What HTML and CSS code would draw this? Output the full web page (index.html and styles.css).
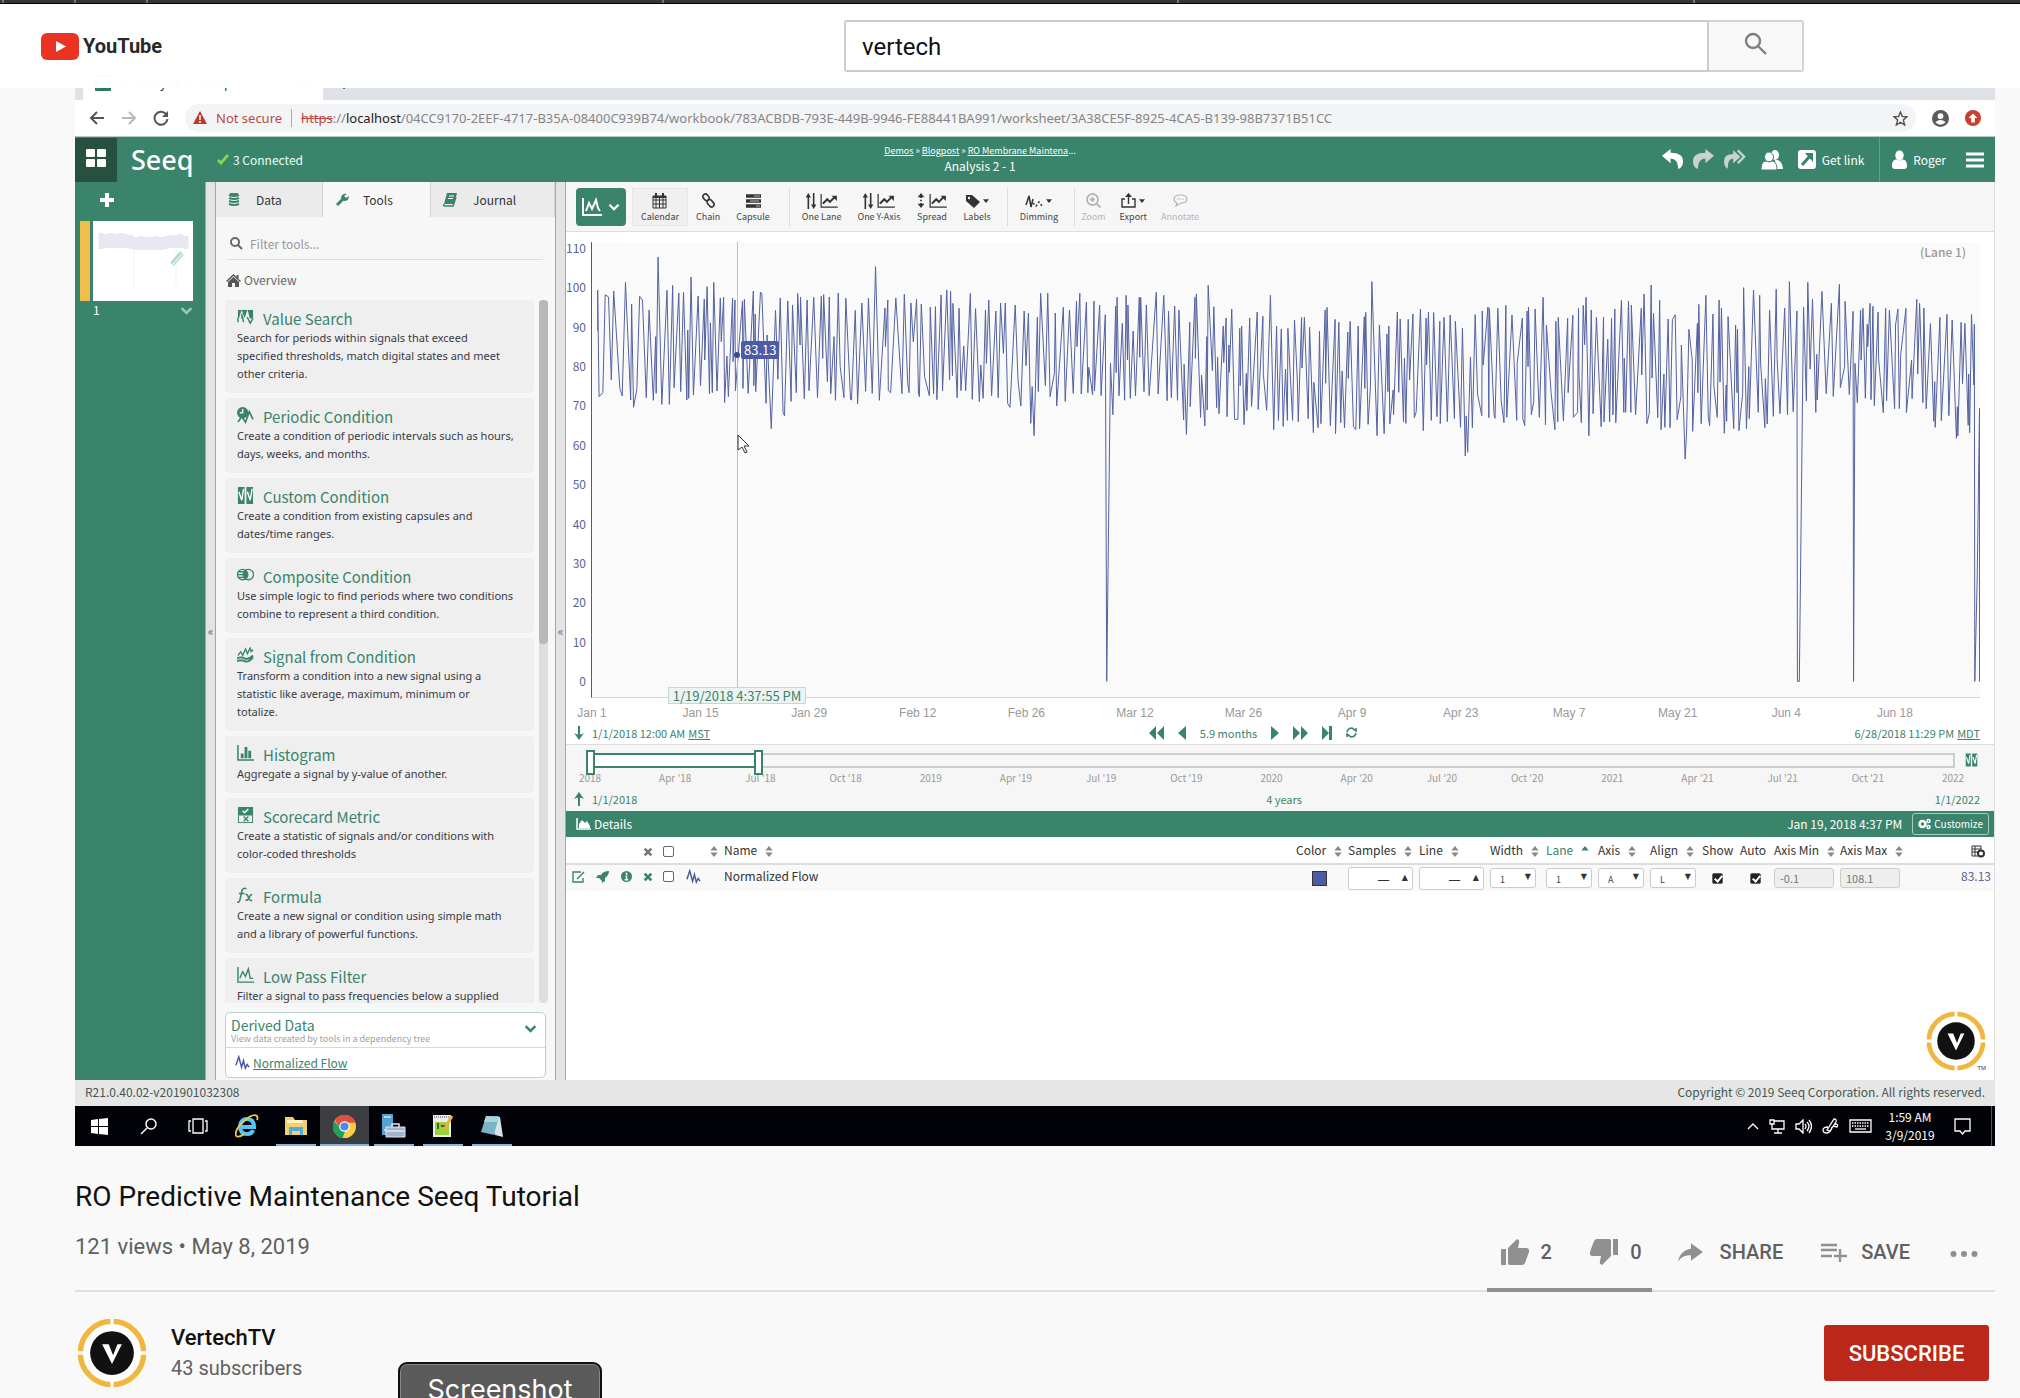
FILE: index.html
```html
<!DOCTYPE html>
<html lang="en">
<head>
    <meta charset="UTF-8">
    <meta name="viewport" content="width=device-width, initial-scale=1.0">
    <title>RO Predictive Maintenance Seeq Tutorial - YouTube</title>
    <link rel="stylesheet" href="styles.css">
</head>
<body>
    <!-- shared icons -->
    <svg class="sprite" aria-hidden="true">
        <symbol id="i-wave" viewBox="0 0 16 16"><path d="M1 11 4 2l3 11 2-7 2 8 2-4 2 3" fill="none" stroke="currentColor" stroke-width="1.6"/></symbol>
        <symbol id="i-sort" viewBox="0 0 8 12"><path d="M4 0 8 5H0zM4 12 0 7h8z" fill="currentColor"/></symbol>
        <symbol id="i-sortup" viewBox="0 0 8 12"><path d="M4 0 8 5H0z" fill="currentColor"/></symbol>
        <symbol id="i-x" viewBox="0 0 12 12"><path d="M2 2l8 8M10 2l-8 8" stroke="currentColor" stroke-width="3.2"/></symbol>
        <symbol id="i-chev" viewBox="0 0 16 16"><path d="M2 5l6 6 6-6" fill="none" stroke="currentColor" stroke-width="3"/></symbol>
        <symbol id="i-arrow" viewBox="0 0 24 24"><path d="M12 4v5C4 10 1 16 0 21c3-5 7-6 12-6v5l11-8z" fill="currentColor"/></symbol>
        <symbol id="i-redo" viewBox="0 0 22 22"><path d="M13 0l9 7-9 8v-5q-8 0-8 11Q0 19 0 13q0-9 13-9z" fill="currentColor"/></symbol>
        <symbol id="i-trend" viewBox="0 0 20 16"><path d="M1 0v15h19" fill="none" stroke="currentColor" stroke-width="1.4"/><path d="M3 11l5-5 3 3 6-6" fill="none" stroke="currentColor" stroke-width="2.4"/><path d="M13 2h6v6z" fill="currentColor"/></symbol>
        <symbol id="i-updown" viewBox="0 0 12 18"><path d="M3 18V3M9 0v15" stroke="currentColor" stroke-width="1.8"/><path d="M3 0l3 5H0zM9 18l3-5H6z" fill="currentColor"/></symbol>
        <symbol id="i-spread" viewBox="0 0 12 18"><path d="M6 0l4 5H2zM6 18l4-5H2z" fill="currentColor"/><path d="M6 4v10" stroke="currentColor" stroke-width="2" stroke-dasharray="2 2"/></symbol>
        <symbol id="i-caret" viewBox="0 0 8 5"><path d="M0 0h8L4 5z" fill="currentColor"/></symbol>
        <symbol id="i-plot" viewBox="0 0 20 20"><path d="M1 1v17h19" fill="none" stroke="currentColor" stroke-width="2"/><path d="M4 14l3-8 3 6 4-9 2 8 2 3" fill="none" stroke="currentColor" stroke-width="2"/></symbol>
        <symbol id="i-user" viewBox="0 0 16 20"><ellipse cx="8" cy="5.500" rx="4.500" ry="5.500" fill="currentColor"/><path d="M0 17c0-5 2-7 5-7q3 2 6 0c3 0 5 2 5 7q0 3-3 3H3q-3 0-3-3z" fill="currentColor"/></symbol>
        <symbol id="i-capsules" viewBox="0 0 18 18"><path fill="currentColor" d="M1 0h7v18H1zM10 0h7v18h-7z"/><path d="M2 5l3 9 2-12M11 5l3 9 2-12" fill="none" stroke="#fff" stroke-width="1.500"/></symbol>
        <symbol id="i-vertech" viewBox="0 0 64 64"><circle cx="32" cy="32" r="32" fill="#fff"/><circle cx="32" cy="32" r="29" fill="none" stroke="#f0b640" stroke-width="5"/><path d="M32 0v64M0 32h64" stroke="#fff" stroke-width="3"/><circle cx="32" cy="32" r="24" fill="#fff"/><circle cx="32" cy="32" r="20" fill="#111"/><path d="M23 24h6l4 10 4-10h4l-9 18z" fill="#fff"/></symbol>
    </svg>

    <header class="masthead">
        <div class="tab-edge"><i></i><i></i><i></i><i></i><i></i><i></i></div>
        <div class="masthead-row">
            <a class="logo" href="#">
                <svg width="38" height="27" viewBox="0 0 38 27"><rect width="38" height="27" rx="6" fill="#eb3323"/><path d="M15 8l10 5.500-10 5.500z" fill="#fff"/></svg>
                <span>YouTube</span>
            </a>
            <form class="search">
                <input type="text" value="vertech" aria-label="Search">
                <button type="button" aria-label="Search">
                    <svg width="26" height="26" viewBox="0 0 26 26" fill="none" stroke="#808080" stroke-width="2.400"><circle cx="10" cy="10" r="7"/><path d="M15 15l8 8"/></svg>
                </button>
            </form>
        </div>
    </header>

    <main class="watch">
        <section class="video">
            <div class="chrome-tabs">
                <div class="chrome-tab"><svg width="16" height="16" viewBox="0 0 16 16"><rect x="1" y="1" width="14" height="14" rx="2" fill="none" stroke="#2a7a60" stroke-width="3"/><path d="M3 13h12" stroke="#2a7a60" stroke-width="3"/></svg><span>1 - Analysis 2 - Seeq</span><span class="tab-close">×</span></div>
                <span class="tab-new">+</span>
            </div>
            <div class="chrome-bar">
                <svg width="16" height="16" viewBox="0 0 16 16" fill="none" stroke="#555" stroke-width="2"><path d="M15 8H2M8 2L2 8l6 6"/></svg>
                <svg width="16" height="16" viewBox="0 0 16 16" fill="none" stroke="#b9b9b9" stroke-width="2"><path d="M1 8h13M8 2l6 6-6 6"/></svg>
                <svg width="16" height="16" viewBox="0 0 16 16"><path d="M13 4a6.500 6.500 0 1 0 1.500 5" fill="none" stroke="#555" stroke-width="2"/><path d="M15 1v6H9z" fill="#555"/></svg>
                <div class="address">
                    <svg width="14" height="14" viewBox="0 0 14 14"><path d="M7 0l7 13H0z" fill="#c0392b"/><path d="M7 4v5M7 10v2" stroke="#fff" stroke-width="1.500"/></svg>
                    <span class="insecure">Not secure</span>
                    <span class="url"><s>https</s>://<b>localhost</b>/04CC9170-2EEF-4717-B35A-08400C939B74/workbook/783ACBDB-793E-449B-9946-FE88441BA991/worksheet/3A38CE5F-8925-4CA5-B139-98B7371B51CC</span>
                    <svg width="15" height="15" viewBox="0 0 16 16" fill="none" stroke="#555" stroke-width="1.500"><path d="M8 1l2 5h5l-4 3.500 1.500 5.500L8 12l-4.500 3L5 9.500 1 6h5z"/></svg>
                </div>
                <svg width="17" height="17" viewBox="0 0 18 18"><circle cx="9" cy="9" r="9" fill="#5a5a5a"/><circle cx="9" cy="6.500" r="3" fill="#fff"/><path d="M3.500 13q5.500-5 11 0-5.500 5-11 0z" fill="#fff"/></svg>
                <svg width="16" height="16" viewBox="0 0 18 18"><circle cx="9" cy="9" r="9" fill="#c8402f"/><path d="M9 4l5 5h-3v5H7V9H4z" fill="#fff"/></svg>
            </div>

            <div class="seeq-header">
                <button class="home" aria-label="Home"><svg width="20" height="18" viewBox="0 0 20 18" fill="#fff"><rect width="9" height="8" rx="1"/><rect x="11" width="9" height="8" rx="1"/><rect y="10" width="9" height="8" rx="1"/><rect x="11" y="10" width="9" height="8" rx="1"/></svg></button>
                <span class="seeq-logo">Seeq</span>
                <span class="connected"><svg width="12" height="11" viewBox="0 0 12 11"><path d="M1 6l3 3 7-8" fill="none" stroke="#8bd450" stroke-width="2.800"/></svg>3 Connected</span>
                <div class="crumbs">
                    <div class="crumb-path"><a href="#">Demos</a> » <a href="#">Blogpost</a> » <a href="#">RO Membrane Maintena</a>...</div>
                    <div>Analysis 2 - 1</div>
                </div>
                <div class="seeq-actions">
                    <svg class="flip" width="21" height="21"><use href="#i-redo"/></svg>
                    <svg class="dim" width="21" height="21"><use href="#i-redo"/></svg>
                    <svg class="dim" width="22" height="21" viewBox="0 0 24 22"><path d="M10 1l8 7-8 7v-5q-6 0-6 11Q0 19 0 13q0-8 10-8z" fill="currentColor"/><path d="M15 1l7 7-7 7" fill="none" stroke="currentColor" stroke-width="2.500"/></svg>
                    <svg class="users" width="22" height="20" viewBox="0 0 22 20" fill="#fff"><ellipse cx="14" cy="5" rx="4" ry="5"/><path d="M14 10q7-1 8 9h-7z"/><g stroke="#3a846c"><ellipse cx="8" cy="7" rx="4.500" ry="5"/><path d="M0 20c0-6 2-9 5-9q3 2 6 0c3 0 5 3 5 9z"/></g></svg>
                    <button class="link-btn"><svg width="18" height="19" viewBox="0 0 18 19"><rect width="18" height="19" rx="3" fill="#fff"/><path d="M4 15l8-9" stroke="#3a846c" stroke-width="3"/><path d="M7 3h8v9z" fill="#3a846c"/></svg>Get link</button>
                    <button class="user-btn"><svg width="15" height="19"><use href="#i-user"/></svg>Roger</button>
                    <svg width="18" height="16" viewBox="0 0 18 16"><path d="M0 2h18M0 8h18M0 14h18" stroke="#fff" stroke-width="3"/></svg>
                </div>
            </div>

            <div class="workspace">
                <nav class="sheets">
                    <svg class="add" width="14" height="14" viewBox="0 0 14 14"><path d="M7 0v14M0 7h14" stroke="#fff" stroke-width="4"/></svg>
                    <div class="sheet">
                        <svg viewBox="0 0 100 80" width="100" height="80"><rect width="100" height="80" fill="#fff"/><path d="M8 12v16M13 13v14M18 12v15M23 13v14M28 12v15M33 13v14M38 14v14M43 16v13M48 15v14M53 16v13M58 16v13M63 15v14M68 16v13M73 15v13M78 14v13M83 14v13M88 13v14M93 15v13" stroke="#e7e8f4" stroke-width="5"/><path d="M83 26v38M41 28v38" stroke="#f2f3f6"/><path d="M79 43l10-11" stroke="#b5dbcb" stroke-width="5"/><path d="M80 43l10-11" stroke="#fff"/></svg>
                    </div>
                    <div class="sheet-foot"><span>1</span><svg width="13" height="13"><use href="#i-chev"/></svg></div>
                </nav>
                <div class="gutter">«</div>

                <aside class="tools">
                    <div class="tool-tabs">
                        <button><svg width="12" height="14" viewBox="0 0 12 14" fill="none" stroke="#3a846c" stroke-width="2.200"><path d="M1 2q5 2 10 0M1 5q5 2 10 0M1 8q5 2 10 0M1 11q5 2 10 0M2 1h8"/></svg>Data</button>
                        <button class="on"><svg width="14" height="14" viewBox="0 0 14 14"><path d="M2 12l7-7" stroke="#3a846c" stroke-width="3"/><path d="M12 1L9 3l2 2 3-2q0 5-5 5L6 5q1-5 6-4z" fill="#3a846c"/></svg>Tools</button>
                        <button><svg width="14" height="14" viewBox="0 0 14 14"><path d="M4 0h10l-3 11H1z" fill="#3a846c"/><path d="M1 11q-1 2 1 2h8l3-9" fill="none" stroke="#3a846c" stroke-width="1.500"/><path d="M6 3h5M5 5.500h5" stroke="#fff"/></svg>Journal</button>
                    </div>
                    <label class="filter">
                        <svg width="13" height="13" viewBox="0 0 13 13" fill="none" stroke="#666" stroke-width="2"><circle cx="5" cy="5" r="4"/><path d="M8 8l4 4"/></svg>
                        <input type="text" placeholder="Filter tools...">
                    </label>
                    <div class="overview"><svg width="15" height="13" viewBox="0 0 15 13" fill="#555"><path d="M0 7l7.500-7 3 3V1h2v4L15 7l-1 1-6.500-6L1 8z"/><path d="M2 8l5.500-5L13 8v5H9V9H6v4H2z"/></svg>Overview</div>

                    <div class="tool-scroll">
                        <div class="tool-list">
                            <a class="tool" href="#">
                                <h3><svg viewBox="0 0 18 18"><path d="M1 1h16v9H1z" fill="currentColor"/><path d="M2 13l3-9 3 9 3-9 2 8" fill="none" stroke="#efefef" stroke-width="2"/><path d="M1 14V9M5 5l2 9M11 9l3 6 3-5" fill="none" stroke="currentColor" stroke-width="1.500"/></svg>Value Search</h3>
                                <p>Search for periods within signals that exceed<br>specified thresholds, match digital states and meet<br>other criteria.</p>
                            </a>
                            <a class="tool" href="#">
                                <h3><svg viewBox="0 0 18 18"><circle cx="6" cy="6" r="6" fill="currentColor"/><path d="M6 2v4H3" fill="none" stroke="#efefef" stroke-width="1.500"/><path d="M1 16l4-6 4 6 4-11 4 8" fill="none" stroke="currentColor" stroke-width="1.800"/></svg>Periodic Condition</h3>
                                <p>Create a condition of periodic intervals such as hours,<br>days, weeks, and months.</p>
                            </a>
                            <a class="tool" href="#">
                                <h3><svg><use href="#i-capsules"/></svg>Custom Condition</h3>
                                <p>Create a condition from existing capsules and<br>dates/time ranges.</p>
                            </a>
                            <a class="tool" href="#">
                                <h3><svg viewBox="0 0 18 18" fill="none" stroke="currentColor" stroke-width="1.400"><circle cx="6" cy="8" r="5.500"/><circle cx="12" cy="8" r="5.500"/><path d="M1 5h8M0 8h10M1 11h8"/><path d="M9 4q3 4 0 8-3-4 0-8z" fill="currentColor"/></svg>Composite Condition</h3>
                                <p>Use simple logic to find periods where two conditions<br>combine to represent a third condition.</p>
                            </a>
                            <a class="tool" href="#">
                                <h3><svg viewBox="0 0 18 18" fill="none" stroke="currentColor" stroke-width="1.400"><path d="M1 9l3-4 2 4 3-7 2 5 3-6 1 4 2-2"/><path d="M0 12q4-2 8 0t9-3M0 15q4-2 8 0t9-4" stroke-width="2"/></svg>Signal from Condition</h3>
                                <p>Transform a condition into a new signal using a<br>statistic like average, maximum, minimum or<br>totalize.</p>
                            </a>
                            <a class="tool" href="#">
                                <h3><svg viewBox="0 0 18 18"><path d="M1 0v16h17" fill="none" stroke="currentColor" stroke-width="1.600"/><path d="M4 9h3v5H4zM8 2h3v12H8zM12 6h3v8h-3z" fill="currentColor"/></svg>Histogram</h3>
                                <p>Aggregate a signal by y-value of another.</p>
                            </a>
                            <a class="tool" href="#">
                                <h3><svg viewBox="0 0 18 18"><path d="M1 0h16v17H1z" fill="currentColor"/><path d="M2 9h14v7H2z" fill="#efefef"/><path d="M6 4l2 2 4-4" fill="none" stroke="#fff" stroke-width="1.500"/><path d="M7 10l5 5M12 10l-5 5" stroke="currentColor" stroke-width="1.400"/></svg>Scorecard Metric</h3>
                                <p>Create a statistic of signals and/or conditions with<br>color-coded thresholds</p>
                            </a>
                            <a class="tool" href="#">
                                <h3><svg viewBox="0 0 18 18" fill="none" stroke="currentColor" stroke-width="1.600"><path d="M10 2q-4-2-5 3L3 14q-1 3-3 2M2 7h6M9 8q2-1 3 3t4 3M16 8q-2 0-3 3t-4 3"/></svg>Formula</h3>
                                <p>Create a new signal or condition using simple math<br>and a library of powerful functions.</p>
                            </a>
                            <a class="tool" href="#">
                                <h3><svg viewBox="0 0 18 18" fill="none" stroke="currentColor" stroke-width="1.500"><path d="M1 0v16h17"/><path d="M3 12l3-7 3 5 3-8 2 10h3"/></svg>Low Pass Filter</h3>
                                <p>Filter a signal to pass frequencies below a supplied</p>
                            </a>
                        </div>
                        <div class="track"><div class="thumb"></div></div>
                    </div>

                    <div class="derived">
                        <div class="derived-head">
                            <div><h3>Derived Data</h3><p>View data created by tools in a dependency tree</p></div>
                            <svg width="13" height="13"><use href="#i-chev"/></svg>
                        </div>
                        <div class="derived-row"><svg width="15" height="15"><use href="#i-wave"/></svg><a href="#">Normalized Flow</a></div>
                    </div>
                </aside>
                <div class="gutter">«</div>

                <section class="display">
                    <div class="toolbar">
                        <button class="view-btn" aria-label="Trend view"><svg width="20" height="20"><use href="#i-plot"/></svg><svg width="12" height="12"><use href="#i-chev"/></svg></button>
                        <button class="tb pressed"><span><svg width="15" height="16" viewBox="0 0 15 16" fill="none" stroke="currentColor"><path d="M1 3h13v12H1zM1 7h13M1 11h13M4 4v11M7.500 4v11M11 4v11"/><path d="M1 4h13M4 0v3M11 0v3" stroke-width="2"/></svg></span>Calendar</button>
                        <button class="tb"><span><svg width="15" height="15" viewBox="0 0 15 15" fill="none" stroke="currentColor" stroke-width="1.600"><rect x="1" y="2" width="7" height="5" rx="2.500" transform="rotate(50 5 5)"/><rect x="6" y="8" width="8" height="5" rx="2.500" transform="rotate(50 10 10)"/></svg></span>Chain</button>
                        <button class="tb"><span><svg width="15" height="14" viewBox="0 0 15 14"><path d="M0 2h15M0 7h15M0 12h15" stroke="currentColor" stroke-width="3.500"/><path d="M8 2h6M4 7h9M10 12h4" stroke="#bbb"/></svg></span>Capsule</button>
                        <button class="tb first lanes"><span><svg width="12" height="16"><use href="#i-updown"/></svg><svg width="18" height="14"><use href="#i-trend"/></svg></span>One Lane</button>
                        <button class="tb"><span><svg width="12" height="16"><use href="#i-updown"/></svg><svg width="18" height="14"><use href="#i-trend"/></svg></span>One Y-Axis</button>
                        <button class="tb"><span><svg width="10" height="17"><use href="#i-spread"/></svg><svg width="18" height="14"><use href="#i-trend"/></svg></span>Spread</button>
                        <button class="tb last"><span><svg width="14" height="14" viewBox="0 0 14 14"><path d="M0 1h6l8 7-6 6-8-7z" fill="currentColor"/><circle cx="3" cy="4" r="1.200" fill="#fff"/></svg><svg width="6" height="4"><use href="#i-caret"/></svg></span>Labels</button>
                        <button class="tb first last"><span><svg width="18" height="14" viewBox="0 0 18 14" fill="none" stroke="currentColor" stroke-width="1.500"><path d="M1 11l3-9 2 11 2-8"/><path d="M8 9l3 3 3-4 3 4" stroke-dasharray="2 2"/></svg><svg width="6" height="4"><use href="#i-caret"/></svg></span>Dimming</button>
                        <button class="tb first off"><span><svg width="15" height="15" viewBox="0 0 15 15" fill="none" stroke="currentColor" stroke-width="1.800"><circle cx="6.500" cy="6.500" r="5.500"/><path d="M10.500 10.500l4 4M6.500 4v5M4 6.500h5"/></svg></span>Zoom</button>
                        <button class="tb"><span><svg width="15" height="15" viewBox="0 0 15 15" fill="none" stroke="currentColor" stroke-width="1.400"><path d="M4 6H1v8h13V6h-3M7.500 11V2"/><path d="M4 4l3.500-4L11 4z" fill="currentColor" stroke="none"/></svg><svg width="6" height="4"><use href="#i-caret"/></svg></span>Export</button>
                        <button class="tb off"><span><svg width="15" height="13" viewBox="0 0 15 13" fill="none" stroke="currentColor" stroke-width="1.200"><path d="M3 12l1-3Q1 8 1 5q0-4 6.500-4T14 5q0 4-6 4z"/><path d="M4 5h7" stroke-dasharray="1.500 1"/></svg></span>Annotate</button>
                    </div>

                    <div class="chart">
                        <div class="y-axis"><span>110</span><span>100</span><span>90</span><span>80</span><span>70</span><span>60</span><span>50</span><span>40</span><span>30</span><span>20</span><span>10</span><span>0</span></div>
                        <div class="plot">
                            <svg viewBox="67 66 2942 1365" preserveAspectRatio="none">
                                <polyline points="79,332 79,210 82,530 90,518 95,224 102,231 108,480 113,213 126,505 131,528 138,187 149,540 151,252 155,562 162,508 168,229 174,240 182,533 188,270 197,541 202,350 203,520 207,111 215,553 226,211 231,553 238,196 241,503 251,219 255,515 261,217 268,540 270,330 272,535 277,171 282,525 292,228 297,497 305,237 306,420 311,200 316,522 318,308 322,518 325,187 332,513 339,234 341,365 346,232 348,548 353,408 356,530 365,234 366,425 370,240 371,512 386,243 387,505 390,238 398,520 409,213 410,497 413,282 414,515 424,216 427,222 436,550 438,345 447,626 456,271 461,478 466,234 472,578 475,587 482,243 489,544 492,255 500,518 503,220 508,375 509,232 517,536 523,240 527,512 537,232 545,533 553,229 556,415 558,224 566,485 570,231 573,521 580,350 583,541 589,219 593,440 601,533 605,235 615,538 617,540 625,271 630,551 639,249 647,514 653,234 661,520 668,140 676,541 688,264 689,380 694,240 695,512 700,518 711,234 724,521 729,223 736,487 739,518 743,249 748,365 755,238 759,520 761,530 765,252 772,470 782,527 784,262 791,521 795,260 798,539 807,225 810,513 819,210 825,479 827,213 831,467 832,250 841,533 845,265 849,512 855,378 859,512 869,220 873,538 880,266 888,545 891,435 896,535 901,270 903,430 908,240 914,527 923,273 928,533 933,249 939,400 943,249 948,550 953,562 964,255 970,480 976,558 983,273 987,437 992,280 997,610 1000,500 1004,647 1011,291 1013,515 1018,220 1028,497 1033,220 1038,530 1047,460 1049,279 1052,558 1066,262 1070,544 1079,270 1087,520 1094,243 1095,380 1101,220 1104,522 1115,246 1118,518 1120,442 1128,524 1131,243 1132,513 1143,255 1146,527 1155,284 1158,1384 1166,430 1171,584 1177,258 1178,458 1180,232 1184,527 1191,310 1196,541 1199,226 1202,420 1203,255 1208,535 1214,333 1219,527 1227,232 1228,412 1230,232 1237,515 1242,255 1248,527 1263,217 1267,522 1279,226 1286,542 1289,273 1295,533 1302,258 1308,541 1311,270 1321,600 1322,433 1327,643 1334,307 1335,560 1345,232 1346,415 1348,222 1357,592 1359,465 1366,618 1370,350 1371,570 1373,196 1382,452 1385,260 1391,563 1393,411 1396,581 1405,318 1406,428 1411,294 1413,590 1417,375 1418,457 1423,267 1429,598 1436,598 1440,325 1441,497 1444,318 1449,614 1454,460 1455,572 1461,294 1465,559 1477,276 1479,568 1489,289 1490,463 1497,571 1505,226 1512,629 1518,318 1522,601 1528,327 1532,619 1537,447 1541,601 1542,325 1552,601 1556,300"/>
                                <g transform="translate(1526 0)">
                                    <polyline points="30,300 36,480 38,605 45,292 46,444 51,292 59,596 62,322 70,638 71,487 80,623 83,333 86,611 95,270 96,490 99,262 106,617 116,298 117,641 124,307 128,608 131,453 136,623 143,336 144,475 148,304 155,620 160,629 165,318 168,626 178,290 179,505 181,277 186,613 191,500 194,185 201,480 205,647 210,315 220,641 226,342 228,515 230,318 232,612 239,510 240,584 248,276 251,517 254,297 261,605 263,415 266,610 271,298 274,480 281,282 284,593 288,575 297,267 303,632 309,294 310,435 314,276 320,601 325,278 332,590 338,304 339,611 347,292 354,605 360,285 369,596 371,304 382,622 386,325 392,708 394,588 397,697 403,411 407,623 413,284 418,522 427,587 428,273 430,435 440,261 442,593 443,265 453,583 455,595 461,265 468,540 474,608 478,256 479,435 480,592 491,285 501,601 502,430 513,294 514,596 518,617 523,273 525,440 526,261 532,584 537,545 540,267 549,592 557,232 562,614 564,315 574,520 582,629 584,304 588,605 589,292 600,602 609,295 610,518 620,286 621,592 630,577 632,265 633,460 638,608 642,256 645,374 648,232 654,647 659,270 663,581 670,292 680,620 685,291 686,606 694,358 698,606 702,295 705,584 709,267 711,608 723,241 728,577 729,415 732,577 738,243 743,577 744,255 753,584 765,265 766,465 771,222 777,611 782,580 786,195 788,474 791,280 800,593 804,241 807,629 813,462 815,622 822,297 826,623 831,299 837,284 841,599 849,530 850,375 858,717 861,640 866,328 873,420 874,634 884,310 885,518 887,253 892,611 902,226 907,590 910,617 917,282 919,500 926,592 930,240 932,486 935,264 941,640 945,495 946,604 949,290 961,626 965,315 968,518 969,328 972,632 980,520 982,203 988,626 993,440 994,596 1003,210 1013,577 1016,226 1018,430 1027,623 1028,476 1032,612 1037,271 1045,589 1051,208 1053,418 1059,581 1069,264 1075,584 1079,185 1087,575 1095,273 1096,1384 1100,1384 1109,262 1115,543 1118,187 1123,447 1128,238 1135,577 1137,403 1138,540 1148,214 1157,521 1168,250 1172,529 1185,193 1187,503 1196,440 1197,244 1206,524 1214,274 1215,1384 1218,430 1223,548 1230,271 1231,420 1235,265 1240,535 1244,313 1245,380 1250,250 1252,539 1256,259 1259,557 1267,276 1268,415 1278,578 1283,265 1285,542 1291,270 1302,566 1304,315 1309,267 1312,566 1315,403 1326,265 1327,578 1338,420 1339,536 1349,238 1351,462 1355,250 1362,548 1364,264 1369,566 1378,311 1385,604 1387,485 1388,622 1398,292 1401,602 1413,283 1417,587 1424,300 1433,655 1435,560 1436,648 1443,307 1446,491 1451,310 1458,616 1459,462 1461,638 1465,283 1470,495 1471,313 1472,1384 1477,1080 1482,565 1482,1384"/>
                                </g>
                            </svg>
                            <span class="lane">(Lane 1)</span>
                            <div class="cursor-line"></div>
                            <span class="cursor-dot"></span>
                            <span class="cursor-value">83.13</span>
                            <span class="cursor-time">1/19/2018 4:37:55 PM</span>
                            <svg class="mouse" width="13" height="20" viewBox="0 0 13 20"><path d="M1 1v15l4-3 3 6 2-1-3-6h5z" fill="#fff" stroke="#333"/></svg>
                        </div>
                    </div>
                    <div class="x-axis"><span>Jan 1</span><span>Jan 15</span><span>Jan 29</span><span>Feb 12</span><span>Feb 26</span><span>Mar 12</span><span>Mar 26</span><span>Apr 9</span><span>Apr 23</span><span>May 7</span><span>May 21</span><span>Jun 4</span><span>Jun 18</span></div>
                    <div class="range">
                        <span class="range-end left"><svg width="10" height="14" viewBox="0 0 10 14"><path d="M5 0v10" stroke="currentColor" stroke-width="2"/><path d="M0 7q5 3 10 0l-5 7z" fill="currentColor"/></svg>1/1/2018 12:00 AM <u>MST</u></span>
                        <div class="range-nav">
                            <svg width="15" height="14" viewBox="0 0 15 14"><path d="M7 0v14L0 7zM15 0v14L8 7z" fill="currentColor"/></svg>
                            <svg width="8" height="14" viewBox="0 0 8 14"><path d="M8 0v14L0 7z" fill="currentColor"/></svg>
                            <span>5.9 months</span>
                            <svg width="8" height="14" viewBox="0 0 8 14"><path d="M0 0v14l8-7z" fill="currentColor"/></svg>
                            <svg width="15" height="14" viewBox="0 0 15 14"><path d="M0 0v14l7-7zM8 0v14l7-7z" fill="currentColor"/></svg>
                            <svg width="10" height="14" viewBox="0 0 10 14"><path d="M0 0v14l7-7zM7 0h3v14H7z" fill="currentColor"/></svg>
                            <svg width="11" height="11" viewBox="0 0 11 11" fill="none" stroke="currentColor" stroke-width="1.600"><path d="M1 5q1-4 5-4l4 3V1M10 6q-1 4-5 4L1 7v3"/></svg>
                        </div>
                        <span class="range-end right">6/28/2018 11:29 PM <u>MDT</u></span>
                    </div>
                    <div class="navigator">
                        <div class="bar-row"><div class="bar"><div class="selection"></div></div><svg width="13" height="16"><use href="#i-capsules"/></svg></div>
                        <div class="nav-ticks"><span>2018</span><span>Apr '18</span><span>Jul '18</span><span>Oct '18</span><span>2019</span><span>Apr '19</span><span>Jul '19</span><span>Oct '19</span><span>2020</span><span>Apr '20</span><span>Jul '20</span><span>Oct '20</span><span>2021</span><span>Apr '21</span><span>Jul '21</span><span>Oct '21</span><span>2022</span></div>
                        <div class="range">
                            <span class="range-end"><svg class="up" width="10" height="14" viewBox="0 0 10 14"><path d="M5 0v10" stroke="currentColor" stroke-width="2"/><path d="M0 7q5 3 10 0l-5 7z" fill="currentColor"/></svg>1/1/2018</span>
                            <span>4 years</span>
                            <span class="range-end right">1/1/2022</span>
                        </div>
                    </div>

                    <div class="details-head">
                        <svg width="15" height="12" viewBox="0 0 15 12"><path d="M1 0v11h14" fill="none" stroke="#fff" stroke-width="1.500"/><path d="M3 10V6l3-4 3 3 2-2 3 5v2z" fill="#fff"/></svg>
                        <span>Details</span>
                        <span class="stamp">Jan 19, 2018 4:37 PM</span>
                        <button><svg width="13" height="12" viewBox="0 0 13 12" fill="none" stroke="#fff"><circle cx="4.500" cy="6" r="3" stroke-width="2.500"/><circle cx="10.500" cy="3" r="1.500" stroke-width="1.500"/><circle cx="10.500" cy="9" r="1.500" stroke-width="1.500"/></svg>Customize</button>
                    </div>
                    <table class="details">
                        <colgroup><col class="c24"><col class="c24"><col class="c24"><col class="c20"><col class="c20"><col class="c30"><col><col class="c52"><col class="c71"><col class="c71"><col class="c56"><col class="c52"><col class="c52"><col class="c52"><col class="c38"><col class="c34"><col class="c66"><col class="c66"><col class="c88"></colgroup>
                        <thead>
                            <tr>
                                <th></th><th></th><th></th>
                                <th class="mid gray"><svg width="10" height="10"><use href="#i-x"/></svg></th>
                                <th class="mid"><input type="checkbox" aria-label="Select all"></th>
                                <th></th>
                                <th class="name"><svg class="sort"><use href="#i-sort"/></svg>Name<svg class="sort"><use href="#i-sort"/></svg></th>
                                <th>Color<svg class="sort"><use href="#i-sort"/></svg></th>
                                <th>Samples<svg class="sort"><use href="#i-sort"/></svg></th>
                                <th>Line<svg class="sort"><use href="#i-sort"/></svg></th>
                                <th>Width<svg class="sort"><use href="#i-sort"/></svg></th>
                                <th class="green">Lane<svg class="sort"><use href="#i-sortup"/></svg></th>
                                <th>Axis<svg class="sort"><use href="#i-sort"/></svg></th>
                                <th>Align<svg class="sort"><use href="#i-sort"/></svg></th>
                                <th>Show</th>
                                <th>Auto</th>
                                <th>Axis Min<svg class="sort"><use href="#i-sort"/></svg></th>
                                <th>Axis Max<svg class="sort"><use href="#i-sort"/></svg></th>
                                <th class="end"><svg width="14" height="13" viewBox="0 0 14 13" fill="none" stroke="#333"><path d="M10 1H1v10h6M1 4h9M1 7h6M4 1v10M10 1v4"/><circle cx="10" cy="8.500" r="3" stroke-width="2"/></svg></th>
                            </tr>
                        </thead>
                        <tbody>
                            <tr>
                                <td class="mid green"><svg width="13" height="12" viewBox="0 0 13 12" fill="none" stroke="currentColor" stroke-width="1.400"><path d="M9 1H1v10h10V7M5 8l7-7" /></svg></td>
                                <td class="mid green"><svg width="13" height="12" viewBox="0 0 13 12"><path d="M13 0q-6 0-8 4H2L0 7h3l3 3v2l3-2V7q4-3 4-7z" fill="currentColor"/></svg></td>
                                <td class="mid green"><svg width="11" height="11" viewBox="0 0 12 12"><circle cx="6" cy="6" r="6" fill="currentColor"/><path d="M6 2v2M6 5v5M4 9.500h4" stroke="#fff" stroke-width="1.800"/></svg></td>
                                <td class="mid green"><svg width="10" height="10"><use href="#i-x"/></svg></td>
                                <td class="mid"><input type="checkbox" aria-label="Select Normalized Flow"></td>
                                <td class="mid indigo"><svg width="15" height="15"><use href="#i-wave"/></svg></td>
                                <td class="flow">Normalized Flow</td>
                                <td><span class="swatch"></span></td>
                                <td><button class="style-btn">—<i>▲</i></button></td>
                                <td><button class="style-btn">—<i>▲</i></button></td>
                                <td><span class="pick"><select aria-label="Width"><option>1</option></select></span></td>
                                <td><span class="pick"><select aria-label="Lane"><option>1</option></select></span></td>
                                <td><span class="pick"><select aria-label="Axis"><option>A</option></select></span></td>
                                <td><span class="pick"><select aria-label="Align"><option>L</option></select></span></td>
                                <td class="tick-cell"><input type="checkbox" checked aria-label="Show"></td>
                                <td class="tick-cell"><input type="checkbox" checked aria-label="Auto"></td>
                                <td><input class="limit" type="text" value="-0.1" aria-label="Axis Min"></td>
                                <td><input class="limit" type="text" value="108.1" aria-label="Axis Max"></td>
                                <td class="value">83.13</td>
                            </tr>
                        </tbody>
                    </table>
                    <div class="watermark"><svg width="60" height="60"><use href="#i-vertech"/></svg><sub>TM</sub></div>
                </section>
            </div>

            <footer class="seeq-footer"><span>R21.0.40.02-v201901032308</span><span>Copyright © 2019 Seeq Corporation. All rights reserved.</span></footer>

            <div class="taskbar">
                <div class="apps">
                    <span><svg width="17" height="17" viewBox="0 0 17 17" fill="#fff"><path d="M0 2l7-1v7H0zM8 1l9-1v8H8zM0 9h7v7l-7-1zM8 9h9v8l-9-1z"/></svg></span>
                    <span><svg width="17" height="17" viewBox="0 0 17 17" fill="none" stroke="#fff" stroke-width="1.500"><circle cx="11" cy="6" r="5"/><path d="M7 10l-6 6"/></svg></span>
                    <span><svg width="20" height="16" viewBox="0 0 20 16" fill="none" stroke="#fff" stroke-width="1.300"><path d="M5 1h10v14H5zM3 3H1v10h2M17 3h2v10h-2"/></svg></span>
                    <span><svg width="24" height="24" viewBox="0 0 24 24" fill="none"><path d="M5 13h14q0-8-7-8-6 0-7 7 0 8 7 8 5 0 6-4" stroke="#5cc3f2" stroke-width="4"/><path d="M1 22Q-1 16 9 7q9-8 13-5 1 2 0 4M1 22q3 2 8-2" stroke="#f2c744" stroke-width="1.800"/></svg></span>
                    <span class="run"><svg width="22" height="20" viewBox="0 0 22 20"><path d="M0 1h8l2 3h12v15H0z" fill="#f2cf72"/><path d="M2 4h16v3H2z" fill="#fff2c0"/><path d="M4 19v-8h14v8h-3v-4H7v4z" fill="#4eaed8"/></svg></span>
                    <span class="run active"><svg width="23" height="23" viewBox="0 0 24 24"><circle cx="12" cy="12" r="12" fill="#ffcd40"/><path d="M2 5a12 12 0 0 1 20 0l1 3H12L7 14z" fill="#dd5044"/><path d="M1.500 6L8 15l5 1-3 8A12 12 0 0 1 1.500 6z" fill="#19a15f"/><circle cx="12" cy="12" r="5.500" fill="#fff"/><circle cx="12" cy="12" r="4.300" fill="#4a8af4"/></svg></span>
                    <span class="run"><svg width="25" height="24" viewBox="0 0 25 24"><path d="M1 0h11v21H1z" fill="#54a3d8"/><path d="M3 3h7M3 16h7" stroke="#d5ecf9" stroke-width="1.500"/><path d="M5 13h19v10H5z" fill="#a4b4cc" stroke="#dfe6f2"/><path d="M11 13v-3h7v3M5 17h19" fill="none" stroke="#dfe6f2" stroke-width="1.500"/></svg></span>
                    <span class="run"><svg width="22" height="24" viewBox="0 0 22 24"><path d="M1 1h18v22H1z" fill="#eee"/><path d="M3 8h14v13H3z" fill="#9bd03f"/><path d="M2 3h15" stroke="#999" stroke-dasharray="1 1" stroke-width="2"/><path d="M6 9v6M9 12h4" stroke="#333" stroke-width="1.500"/><path d="M12 16l8-14" stroke="#e8b23a" stroke-width="3"/></svg></span>
                    <span class="run"><svg width="24" height="24" viewBox="0 0 24 24"><path d="M6 2l14 1 3 20-8-2z" fill="#d8e4ea"/><path d="M6 2h13l-5 19L1 18z" fill="#79b3c6"/><path d="M6 2l13 1-2 5L4 8z" fill="#a8d3e0"/></svg></span>
                </div>
                <div class="tray">
                    <svg width="12" height="8" viewBox="0 0 12 8"><path d="M1 7l5-5 5 5"/></svg>
                    <svg width="16" height="15" viewBox="0 0 16 15"><path d="M5 2h10v8H3V6M9 10v4M5 14h8M1 1h4v4H1zM3 5v5"/></svg>
                    <svg width="17" height="15" viewBox="0 0 17 15"><path d="M1 5h3l4-4v13l-4-4H1zM10 5q2 2 0 5M12 3q4 4 0 9M14 1q5 6 0 13"/></svg>
                    <svg width="17" height="16" viewBox="0 0 17 16"><path d="M5 12L12 1q3 0 2 3L8 13zM6 9q-5 0-5 3t4 3q4-1 5-6M13 6q4 0 2 3l-4-1"/></svg>
                    <svg class="kbd" width="23" height="14" viewBox="0 0 23 14"><path d="M1 1h21v12H1z"/><path d="M3 4h17M3 7h17" stroke-dasharray="1.500 1"/><path d="M6 10h11"/></svg>
                    <div class="clock">1:59 AM<br>3/9/2019</div>
                    <svg width="17" height="17" viewBox="0 0 17 17"><path d="M1 1h15v12h-5l-2.500 3L6 13H1z"/></svg>
                </div>
            </div>
        </section>

        <section class="info">
            <h1>RO Predictive Maintenance Seeq Tutorial</h1>
            <div class="info-row">
                <div class="views">121 views • May 8, 2019</div>
                <div class="actions">
                    <div class="votes">
                        <button><svg width="28" height="26" viewBox="0 0 28 26" fill="#909090"><path d="M0 10h5v16H0zM7 9l9-9q3 1 2 4l-1 5h9q3 1 2 4l-4 11q-1 2-3 2H9q-2 0-2-2z"/></svg>2</button>
                        <button><svg class="turn" width="28" height="26" viewBox="0 0 28 26" fill="#909090"><path d="M0 10h5v16H0zM7 9l9-9q3 1 2 4l-1 5h9q3 1 2 4l-4 11q-1 2-3 2H9q-2 0-2-2z"/></svg>0</button>
                    </div>
                    <button class="share"><svg width="26" height="26"><use href="#i-arrow"/></svg>SHARE</button>
                    <button class="save"><svg width="26" height="20" viewBox="0 0 26 20" fill="none" stroke="#909090" stroke-width="2.400"><path d="M0 3h16M0 8h16M0 14h11M19 7v13M13 14h13"/></svg>SAVE</button>
                    <button class="more" aria-label="More actions"><svg width="28" height="8" viewBox="0 0 28 8" fill="#909090"><circle cx="3.500" cy="4" r="3"/><circle cx="14" cy="4" r="3"/><circle cx="24.500" cy="4" r="3"/></svg></button>
                </div>
            </div>
            <div class="channel">
                <svg width="70" height="70"><use href="#i-vertech"/></svg>
                <div class="channel-text">
                    <a href="#">VertechTV</a>
                    <span>43 subscribers</span>
                </div>
                <button class="subscribe">SUBSCRIBE</button>
            </div>
        </section>
    </main>

    <div class="dock-tip">Screenshot</div>
</body>
</html>
```
FILE: styles.css
```css
* {
    box-sizing: border-box;
}

body {
    margin: 0;
    height: 100vh;
    overflow: hidden;
    position: relative;
    background: #f9f9f9;
    font-family: Roboto, sans-serif;
    color: #111;
}

button {
    border: 0;
    padding: 0;
    margin: 0;
    background: none;
    color: inherit;
    font: inherit;
}

svg {
    flex: none;
}

h1, h3, p {
    margin: 0;
    font-weight: normal;
}

.sprite {
    position: absolute;
    width: 0;
    height: 0;
}

/* masthead */
.masthead {
    position: relative;
    z-index: 2;
    height: 88px;
    background: rgba(255, 255, 255, 0.98);
}

.tab-edge {
    height: 4px;
    background: #35363a;
    border-bottom: 1px solid #000;
    display: grid;
    grid-template-columns: 4px 72px 72px 516px 515px 516px;
}

.tab-edge i {
    border-right: 2px solid #777;
}

.masthead-row {
    display: grid;
    grid-template-columns: 844px minmax(300px, 960px) 1fr;
    align-items: center;
    height: 84px;
}

.logo {
    display: flex;
    align-items: center;
    gap: 4px;
    padding-left: 41px;
    color: #282828;
    text-decoration: none;
    font: bold 20px/30px Roboto, sans-serif;
}

.search {
    display: flex;
    height: 52px;
}

.search input {
    flex: 1;
    min-width: 0;
    border: 2px solid #ccc;
    border-radius: 3px 0 0 3px;
    padding: 2px 16px 0;
    font: 24px Roboto, sans-serif;
    color: #111;
    background: #fff;
}

.search button {
    width: 95px;
    border: 2px solid #d3d3d3;
    border-left: 0;
    border-radius: 0 3px 3px 0;
    background: #f8f8f8;
}

/* video */
.watch {
    padding: 0 25px 0 75px;
}

.video {
    aspect-ratio: 16 / 9;
    margin-top: -22px;
    display: flex;
    flex-direction: column;
    background: #fff;
    font: 12px/18px "Noto Sans CJK SC", "Open Sans", sans-serif;
    color: #333;
}

.chrome-tabs {
    height: 34px;
    flex: none;
    background: #dfe3e8;
    display: flex;
    align-items: center;
    padding-left: 8px;
}

.chrome-tab {
    width: 240px;
    height: 34px;
    padding: 0 12px;
    background: #fff;
    display: flex;
    align-items: center;
    gap: 8px;
}

.tab-close {
    margin-left: auto;
}

.tab-new {
    margin-left: 16px;
    font-size: 18px;
}

.chrome-bar {
    height: 37px;
    flex: none;
    padding: 0 14px;
    display: flex;
    align-items: center;
    gap: 16px;
    border-bottom: 1px solid #b7c9c2;
}

.address {
    flex: 1;
    height: 28px;
    border-radius: 14px;
    background: #f3f4f6;
    display: flex;
    align-items: center;
    gap: 9px;
    padding: 0 8px;
    font: 13px/18px "Noto Sans", sans-serif;
    color: #858585;
}

.insecure {
    color: #b94a40;
    border-right: 1px solid #aaa;
    padding-right: 9px;
}

.url {
    flex: 1;
}

.url s {
    color: #b94a40;
}

.url b {
    font-weight: normal;
    color: #222;
}

.seeq-header {
    height: 45px;
    flex: none;
    display: flex;
    align-items: center;
    background: #3a846c;
    color: #fff;
    position: relative;
}

.home {
    width: 42px;
    height: 44px;
    background: #28503f;
}

.seeq-logo {
    margin-left: 14px;
    width: 86px;
    font: 500 27px/30px "Noto Sans", sans-serif;
}

.connected {
    display: flex;
    align-items: center;
    gap: 4px;
    color: #e9fff6;
}

.crumbs {
    position: absolute;
    left: 0;
    right: 0;
    margin: 0 110px 0 0;
    padding-bottom: 3px;
    text-align: center;
    line-height: 15px;
}

.crumb-path {
    font-size: 9px;
}

.crumbs a {
    color: inherit;
}

.seeq-actions {
    margin-left: auto;
    padding-right: 11px;
    height: 45px;
    display: flex;
    align-items: center;
    gap: 10px;
    position: relative;
    font-size: 12px;
}

.flip {
    transform: scaleX(-1);
}

.dim {
    color: #c6d3ce;
}

.users {
    margin: 0 5px;
}

.link-btn,
.user-btn {
    height: 45px;
    display: flex;
    align-items: center;
    gap: 6px;
}

.link-btn {
    padding-right: 15px;
    border-right: 1px solid #5fa18b;
}

.user-btn {
    padding: 0 10px 0 2px;
}

.workspace {
    flex: 1;
    min-height: 0;
    display: flex;
}

/* worksheet list */
.sheets {
    width: 130px;
    background: #3a846c;
    color: #fff;
    padding: 11px 12px 0 5px;
}

.add {
    display: block;
    margin: 0 0 14px 20px;
}

.sheet {
    border-left: 10px solid #f0be4b;
    padding-left: 3px;
    height: 80px;
}

.sheet-foot {
    display: flex;
    justify-content: space-between;
    align-items: center;
    padding-left: 13px;
}

.sheet-foot svg {
    color: #9ac9b8;
}

.gutter {
    width: 11px;
    border: 1px solid #a5a5a5;
    border-width: 0 1px;
    background: #e4e4e4;
    display: flex;
    align-items: center;
    justify-content: center;
    color: #666;
}

/* tools */
.tools {
    width: 339px;
    background: #f7f7f7;
    display: flex;
    flex-direction: column;
}

.tool-tabs {
    display: grid;
    grid-template-columns: 107px 108px 1fr;
    height: 35px;
}

.tool-tabs button {
    display: flex;
    align-items: center;
    gap: 16px;
    padding-left: 12px;
    background: #ebebeb;
    border-right: 1px solid #d5d5d5;
}

.tool-tabs .on {
    background: #f7f7f7;
    gap: 14px;
}

.filter {
    display: flex;
    align-items: center;
    gap: 7px;
    margin: 11px 12px 0 11px;
    padding: 0 3px;
    height: 32px;
    border-bottom: 1px solid #ddd;
}

.filter input {
    flex: 1;
    border: 0;
    padding: 0;
    background: none;
    font: inherit;
}

.filter input::placeholder {
    color: #999;
}

.overview {
    display: flex;
    align-items: center;
    gap: 3px;
    padding-left: 10px;
    margin: 11px 0;
    color: #666;
}

.tool-scroll {
    flex: 1;
    min-height: 0;
    display: flex;
    gap: 5px;
    padding: 0 7px 0 9px;
}

.tool-list {
    flex: 1;
    overflow: hidden;
}

.tool {
    display: block;
    background: #efefef;
    border-radius: 4px;
    padding: 9px 0 10px 12px;
    margin-bottom: 5px;
    color: #3a3a44;
    text-decoration: none;
}

.tool h3 {
    display: flex;
    gap: 9px;
    font-size: 15px;
    line-height: 20px;
    color: #3a846c;
}

.tool h3 svg {
    width: 17px;
    height: 17px;
}

.tool p {
    font: 11px/18px "Noto Sans", sans-serif;
    white-space: nowrap;
}

.track {
    width: 9px;
    background: #dedede;
    border-radius: 4px;
}

.thumb {
    height: 344px;
    background: #b8b8b8;
    border-radius: 4px;
}

.derived {
    margin: 9px 9px 2px;
    border: 1px solid #b9d2c9;
    border-radius: 5px;
    background: #fff;
    color: #3a846c;
}

.derived-head {
    display: flex;
    justify-content: space-between;
    padding: 5px 8px 3px 5px;
    border-bottom: 1px solid #d2dcd8;
}

.derived-head h3 {
    font-size: 14px;
    line-height: 15px;
}

.derived-head p {
    font-size: 9px;
    line-height: 11px;
    color: #a0a0a0;
}

.derived-head svg {
    margin-top: 4px;
}

.derived-row {
    display: flex;
    align-items: center;
    gap: 3px;
    height: 29px;
    padding-left: 9px;
}

.derived-row a {
    color: inherit;
}

.derived-row svg,
.indigo {
    color: #4d59a5;
}

/* trend display */
.display {
    flex: 1;
    min-width: 0;
    display: flex;
    flex-direction: column;
    position: relative;
    border-right: 1px solid #ddd;
}

.toolbar {
    height: 50px;
    flex: none;
    display: flex;
    align-items: center;
    padding-left: 10px;
    background: #f6f6f6;
    border-bottom: 1px solid #ddd;
}

.view-btn {
    width: 50px;
    height: 38px;
    margin-right: 6px;
    border-radius: 4px;
    background: #3a846c;
    color: #fff;
    display: flex;
    align-items: center;
    justify-content: center;
    gap: 6px;
}

.tb {
    height: 38px;
    padding: 0 8px;
    font-size: 9px;
    line-height: 12px;
    color: #444;
}

.tb span {
    height: 20px;
    display: flex;
    align-items: center;
    justify-content: center;
    gap: 3px;
    color: #333;
}

.tb.pressed {
    border: 1px solid #e6e6e6;
    background: #f0f0f0;
}

.tb.first {
    border-left: 1px solid #ddd;
    margin-left: 5px;
    padding-left: 12px;
}

.tb.lanes {
    margin-left: 11px;
}

.tb.last {
    margin-right: 3px;
}

.tb.off,
.tb.off span {
    color: #b5b5b5;
}

.tb.off {
    padding: 0 6px;
}

.chart {
    display: flex;
    padding: 10px 14px 0 0;
}

.y-axis {
    width: 25px;
    height: 445px;
    padding-right: 5px;
    display: flex;
    flex-direction: column;
    justify-content: space-between;
    align-items: flex-end;
    line-height: 12px;
    font-size: 12px;
    color: #5a6496;
}

.plot {
    flex: 1;
    height: 456px;
    position: relative;
    background: #fafafb;
    border-left: 1px solid #4d5991;
    border-bottom: 1px solid #d5d5d5;
}

.plot > svg:first-child {
    display: block;
    width: 100%;
    height: 100%;
}

.plot polyline {
    fill: none;
    stroke: #5562a0;
    stroke-width: 1px;
    vector-effect: non-scaling-stroke;
}

.lane {
    position: absolute;
    right: 14px;
    top: 1px;
    color: #999;
    font-weight: 500;
}

.cursor-line {
    position: absolute;
    left: 145px;
    top: 0;
    bottom: 0;
    border-left: 1px solid #b9c0c6;
}

.cursor-dot {
    position: absolute;
    left: 142px;
    top: 110px;
    width: 6px;
    height: 6px;
    border-radius: 50%;
    background: #3b4791;
}

.cursor-value {
    position: absolute;
    left: 149px;
    top: 99px;
    padding: 0 3px;
    border-radius: 2px;
    background: #4d5aa5;
    color: #fff;
    font-size: 13px;
}

.cursor-time {
    position: absolute;
    left: 76px;
    bottom: -7px;
    width: 138px;
    font-size: 13px;
    line-height: 15px;
    text-align: center;
    background: #edf3f1;
    border: 1px solid #c9d6d1;
    color: #3a846c;
    white-space: nowrap;
}

.mouse {
    position: absolute;
    left: 145px;
    top: 192px;
}

/* zero-width cells keep each label centred on its tick */
.x-axis,
.nav-ticks {
    display: flex;
    justify-content: space-between;
}

.x-axis span,
.nav-ticks span {
    width: 0;
    display: flex;
    justify-content: center;
    white-space: nowrap;
}

.x-axis {
    padding: 7px 99px 0 26px;
    font: 12px/16px "Liberation Sans", sans-serif;
    color: #999;
}

.range {
    display: flex;
    justify-content: space-between;
    align-items: center;
    height: 23px;
    padding: 0 14px 0 8px;
    font-size: 11px;
    color: #3a846c;
}

.range-end {
    width: 260px;
    display: flex;
    align-items: center;
    gap: 3px;
}

.range-end.left {
    width: 212px;
}

.range-end svg {
    margin-right: 5px;
}

.right {
    justify-content: flex-end;
}

.up {
    transform: scaleY(-1);
}

.range-nav {
    display: flex;
    align-items: center;
    gap: 14px;
}

.navigator {
    background: #f6f6f6;
    border-top: 1px solid #ddd;
}

.navigator .range {
    height: 25px;
}

.navigator .right {
    width: 246px;
}

.bar-row {
    display: flex;
    align-items: center;
    gap: 10px;
    padding: 7px 16px 0 22px;
    color: #3a846c;
}

.bar {
    flex: 1;
    height: 15px;
    border: 2px solid #ccc;
}

.selection {
    width: 173px;
    height: 15px;
    margin: -2px;
    border: 2px solid #3a846c;
    background: #fff;
    position: relative;
}

.selection::before,
.selection::after {
    content: '';
    position: absolute;
    top: -5px;
    width: 5px;
    height: 21px;
    border: 2px solid #3a846c;
    background: #fff;
}

.selection::before {
    left: -4px;
}

.selection::after {
    right: -4px;
}

.nav-ticks {
    padding: 2px 41px 0 24px;
    font-size: 10px;
    line-height: 16px;
    color: #999;
}

.details-head {
    height: 26px;
    flex: none;
    display: flex;
    align-items: center;
    gap: 3px;
    padding: 0 5px 0 10px;
    background: #3a846c;
    color: #fff;
}

.stamp {
    margin-left: auto;
}

.details-head button {
    display: flex;
    align-items: center;
    gap: 3px;
    height: 22px;
    margin-left: 7px;
    padding: 0 5px;
    border: 1px solid #a7cdbf;
    border-radius: 3px;
    font-size: 10px;
}

.details {
    width: 100%;
    table-layout: fixed;
    border-collapse: collapse;
    color: #333;
}

.c20 { width: 20px; }
.c24 { width: 24px; }
.c30 { width: 30px; }
.c34 { width: 34px; }
.c38 { width: 38px; }
.c52 { width: 52px; }
.c56 { width: 56px; }
.c66 { width: 66px; }
.c71 { width: 71px; }
.c88 { width: 88px; }

.details th {
    height: 27px;
    padding: 0;
    font-weight: normal;
    text-align: left;
    white-space: nowrap;
    border-bottom: 2px solid #ddd;
}

.details td {
    height: 27px;
    padding: 0;
    background: #f9f9f9;
}

.details svg {
    vertical-align: middle;
}

.details .sort {
    width: 8px;
    height: 11px;
    margin-left: 8px;
    color: #888;
}

.details .mid {
    text-align: center;
}

.details td.mid {
    padding-bottom: 6px;
}

.details .name .sort:first-child {
    margin: 0 6px 0 2px;
}

.details .green,
.details .green .sort {
    color: #3a846c;
}

.details .gray {
    color: #777;
}

.details .flow {
    padding: 0 0 4px 16px;
}

.details .end {
    text-align: right;
    padding-right: 9px;
}

.details .value {
    text-align: right;
    padding: 0 3px 4px 0;
    color: #5a6496;
}

.details input[type="checkbox"] {
    appearance: none;
    width: 11px;
    height: 11px;
    margin: 0;
    border: 1px solid #666;
    border-radius: 2px;
    background: #fff;
    vertical-align: middle;
}

.details input[type="checkbox"]:checked {
    background: #222;
    position: relative;
}

.details input:checked::after {
    content: '';
    position: absolute;
    left: 3px;
    top: 0;
    width: 3px;
    height: 6px;
    border: solid #fff;
    border-width: 0 2px 2px 0;
    transform: rotate(40deg);
}

.details .tick-cell {
    padding: 0 0 2px 10px;
}

.swatch {
    display: block;
    width: 15px;
    height: 15px;
    margin-left: 16px;
    background: #4d5da5;
    border: 1px solid #333;
}

.style-btn {
    width: 65px;
    height: 23px;
    border: 1px solid #ccc;
    border-radius: 3px;
    background: #fff;
    display: flex;
    align-items: center;
    justify-content: flex-end;
    gap: 12px;
    padding-right: 4px;
    font-size: 14px;
}

.style-btn i {
    font: 8px/8px "DejaVu Sans", sans-serif;
}

.pick {
    display: block;
    width: 46px;
    position: relative;
}

.pick::after {
    content: '▼';
    position: absolute;
    right: 5px;
    top: 5px;
    font: 8px/8px "DejaVu Sans", sans-serif;
}

.pick select {
    appearance: none;
    display: block;
    width: 46px;
    height: 20px;
    border: 1px solid #ccc;
    border-radius: 3px;
    background: #fff;
    padding: 4px 0 0 9px;
    font: 9px/14px "Noto Sans CJK SC", sans-serif;
    color: #444;
}

.limit {
    display: block;
    width: 60px;
    height: 20px;
    border: 1px solid #ccc;
    border-radius: 3px;
    background: #eee;
    padding: 0 5px;
    font: 11px "Noto Sans CJK SC", sans-serif;
    color: #777;
}

.watermark {
    position: absolute;
    right: 8px;
    bottom: 9px;
    height: 60px;
}

.watermark sub {
    position: absolute;
    right: 0;
    bottom: 0;
    font: 6px/6px "Liberation Sans", sans-serif;
}

.seeq-footer {
    height: 26px;
    flex: none;
    display: flex;
    justify-content: space-between;
    align-items: center;
    padding: 0 10px 2px;
    background: #e6e6e6;
    color: #465650;
}

.taskbar {
    height: 40px;
    flex: none;
    display: flex;
    justify-content: space-between;
    background: #020308;
    color: #fff;
}

.apps {
    display: flex;
}

.apps span {
    width: 49px;
    display: flex;
    align-items: center;
    justify-content: center;
}

.apps .run {
    background: linear-gradient(#8ab4e0, #8ab4e0) center bottom / 40px 2px no-repeat;
}

.apps .active {
    background-color: #3d3e42;
    background-size: 49px 2px;
}

.tray {
    display: flex;
    align-items: center;
    gap: 10px;
    margin-right: 3px;
    padding-right: 20px;
    border-right: 1px solid #555;
}

.tray svg {
    fill: none;
    stroke: #fff;
    stroke-width: 1.3;
}

.clock {
    width: 56px;
    margin-right: 6px;
    text-align: center;
}

/* below the player */
.info h1 {
    margin-top: 33px;
    font-size: 28px;
    line-height: 36px;
}

.info-row {
    display: flex;
    justify-content: space-between;
    height: 77px;
    border-bottom: 2px solid #e0e0e0;
}

.views {
    padding-top: 17px;
    font-size: 22px;
    line-height: 30px;
    color: #606060;
}

.actions {
    display: flex;
    height: 77px;
    font-size: 20px;
    font-weight: 500;
    color: #606060;
}

.actions button {
    display: flex;
    align-items: center;
    padding-bottom: 4px;
}

.votes {
    display: flex;
    width: 165px;
    height: 77px;
    padding: 4px 10px 0 14px;
    justify-content: space-between;
    border-bottom: 4px solid #909090;
}

.votes button {
    gap: 12px;
}

.turn {
    transform: rotate(180deg);
}

.share {
    margin-left: 26px;
}

.share svg {
    color: #909090;
    margin-right: 16px;
}

.save {
    margin-left: 38px;
}

.save svg {
    margin-right: 14px;
}

.actions .more {
    margin: 0 17px 0 40px;
    padding-bottom: 0;
}

.channel {
    display: flex;
    align-items: center;
    padding: 26px 6px 0 2px;
}

.channel-text {
    flex: 1;
    display: flex;
    flex-direction: column;
    padding-left: 24px;
    font-size: 20px;
    line-height: 30px;
    color: #606060;
}

.channel-text a {
    font-size: 22px;
    font-weight: 500;
    color: #111;
    text-decoration: none;
}

.subscribe {
    width: 165px;
    height: 56px;
    border-radius: 3px;
    background: #bb271a;
    color: #fff;
    font-size: 22px;
    font-weight: 500;
}

.dock-tip {
    position: absolute;
    z-index: 3;
    left: 398px;
    bottom: -14px;
    width: 204px;
    height: 50px;
    padding-top: 11px;
    border: 2px solid #111;
    border-radius: 9px;
    box-shadow: inset 0 0 0 1px #888;
    background: #5a5a5a;
    color: #fff;
    text-align: center;
    font: 27px/30px Inter, sans-serif;
}
```
